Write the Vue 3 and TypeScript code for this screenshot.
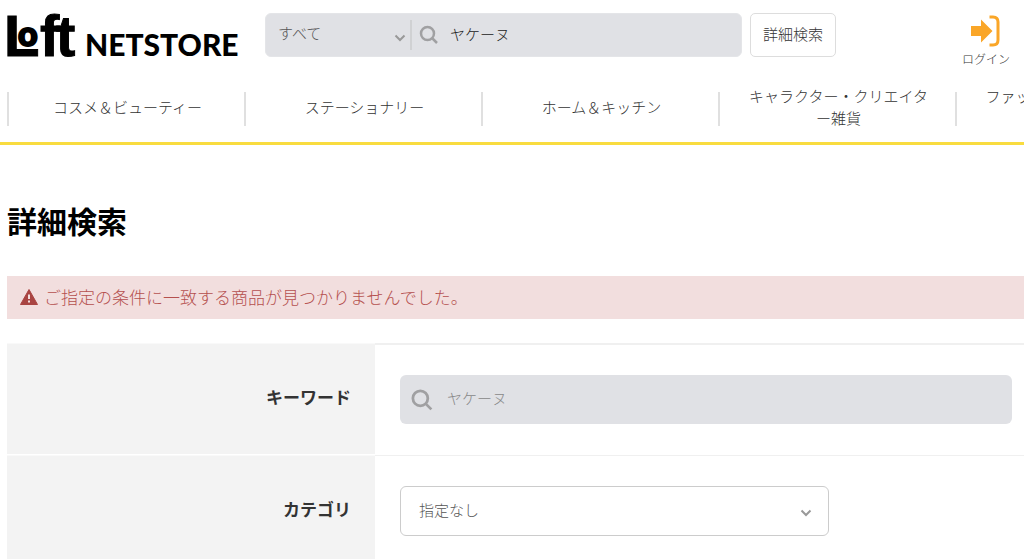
<script setup lang="ts">
import { ref } from 'vue'

const scope = ref('すべて')
const headerKeyword = ref('ヤケーヌ')
const category = ref('指定なし')
const keyword = ref('')

const categories: string[] = [
  'コスメ＆ビューティー',
  'ステーショナリー',
  'ホーム＆キッチン',
  'キャラクター・クリエイター雑貨',
  'ファッション・バッグ・アクセサリー',
]
</script>

<template>
  <div class="page">
    <header class="header">
      <a class="logo" href="#" aria-label="Loft NETSTORE">
        <svg class="mark" viewBox="0 0 68 44" width="68" height="44" aria-hidden="true">
          <text><tspan class="tall" x="-4" y="43">L</tspan><tspan class="round" x="10" y="33">o</tspan><tspan class="tall" x="32" y="43">f</tspan><tspan class="tall" x="48" y="43">t</tspan></text>
        </svg>
        <span class="store">NETSTORE</span>
      </a>

      <form class="search" role="search" @submit.prevent>
        <div class="search-box">
          <div class="scope">
            <select v-model="scope" aria-label="検索対象">
              <option>すべて</option>
            </select>
            <svg class="chevron" viewBox="0 0 12 8" width="12" height="8" aria-hidden="true">
              <path d="M1.500 1.500 6 6l4.500-4.500" />
            </svg>
          </div>
          <svg class="lens" viewBox="0 0 20 20" width="20" height="20" aria-hidden="true">
            <circle cx="8.500" cy="8.500" r="6.500" />
            <path d="m13.500 13.500 4.500 4.500" />
          </svg>
          <input v-model="headerKeyword" type="text" aria-label="検索キーワード" />
        </div>
        <button class="detail" type="button">詳細検索</button>
      </form>

      <a class="login" href="#">
        <svg viewBox="0 0 30 32" width="30" height="32" aria-hidden="true">
          <path class="arrow" d="M0 11h10V4.500L21.500 16 10 27.500V21H0z" />
          <path class="door" d="M18.500 2H22q5 0 5 5v18q0 5-5 5h-3.500" />
        </svg>
        <span>ログイン</span>
      </a>
    </header>

    <nav class="nav" aria-label="商品カテゴリ">
      <a v-for="item in categories" :key="item" href="#">
        <span>{{ item }}</span>
      </a>
    </nav>

    <main class="main">
      <h1>詳細検索</h1>

      <p class="alert" role="alert">
        <svg viewBox="0 0 18 16" width="18" height="16" aria-hidden="true">
          <path class="triangle" d="M9 .5 17.500 15.500H.5z" />
          <path class="bang" d="M9 5.500v4.500M9 11.500v2" />
        </svg>
        <span>ご指定の条件に一致する商品が見つかりませんでした。</span>
      </p>

      <form class="conditions" @submit.prevent>
        <div class="row">
          <label for="keyword">キーワード</label>
          <div class="field">
            <div class="keyword-box">
              <svg class="lens" viewBox="0 0 20 20" width="22" height="22" aria-hidden="true">
                <circle cx="8.500" cy="8.500" r="6.800" />
                <path d="m13.500 13.500 5 5" />
              </svg>
              <input id="keyword" v-model="keyword" type="text" placeholder="ヤケーヌ" />
            </div>
          </div>
        </div>
        <div class="row">
          <label for="category">カテゴリ</label>
          <div class="field">
            <div class="category-box">
              <select id="category" v-model="category">
                <option>指定なし</option>
              </select>
              <svg class="chevron" viewBox="0 0 12 8" width="12" height="8" aria-hidden="true">
                <path d="M1.500 1.500 6 6l4.500-4.500" />
              </svg>
            </div>
          </div>
        </div>
      </form>
    </main>
  </div>
</template>

<style>
body {
  margin: 0;
  background: #fff;
}
</style>

<style scoped>
.page {
  overflow: hidden;
  color: #333;
  font-family: "Noto Sans CJK JP", sans-serif;
  font-size: 15px;
  font-weight: 300;
  line-height: 22px;
}
.page * {
  box-sizing: border-box;
}
a {
  color: inherit;
  text-decoration: none;
}
input,
select,
button {
  margin: 0;
  padding: 0;
  border: 0;
  background: transparent;
  color: inherit;
  font: inherit;
  outline: none;
}
select {
  appearance: none;
}

.header {
  display: flex;
  align-items: flex-start;
  padding: 13px 14px 0 8px;
}
.logo {
  display: flex;
  flex: none;
  align-items: flex-end;
  width: 257px;
  height: 44px;
  color: #000;
}
.mark {
  display: block;
  overflow: visible;
}
.mark tspan {
  font-weight: 700;
  stroke: #000;
}
.mark .tall {
  font-family: "Liberation Sans", sans-serif;
  font-size: 58px;
  stroke-width: 1px;
}
.mark .round {
  font-family: Lato, sans-serif;
  font-size: 34px;
  font-weight: 900;
  stroke-width: 2px;
}
.store {
  margin-left: 9px;
  font-family: Lato, sans-serif;
  font-size: 30px;
  font-weight: 900;
  line-height: 26px;
}
.search {
  display: flex;
  flex: 0 1 571px;
  gap: 8px;
}
.search-box {
  display: flex;
  flex: 1;
  align-items: center;
  height: 44px;
  border: 1px solid #e4e5e8;
  border-radius: 6px;
  background: #e0e1e5;
}
.scope {
  position: relative;
  flex: none;
  width: 146px;
  height: 30px;
  border-right: 2px solid #d0d1d3;
}
.scope select {
  width: 100%;
  height: 26px;
  padding-left: 12px;
  color: #555;
}
.chevron {
  position: absolute;
  fill: none;
  stroke: #999;
  stroke-width: 2;
}
.scope .chevron {
  right: 4px;
  bottom: 8px;
}
.lens {
  flex: none;
  fill: none;
  stroke: #a0a0a2;
  stroke-width: 2.5;
}
.search-box .lens {
  margin-left: 7px;
}
.search-box input {
  flex: 1;
  min-width: 0;
  height: 38px;
  padding: 0 12px 4px 11px;
  color: #222;
}
.detail {
  flex: none;
  width: 86px;
  height: 44px;
  padding-bottom: 2px;
  border: 1px solid #ddd;
  border-radius: 5px;
}
.login {
  display: flex;
  flex-direction: column;
  align-items: center;
  margin-left: auto;
  padding-top: 2px;
  font-size: 12px;
  line-height: 24px;
}
.login svg {
  display: block;
}
.arrow {
  fill: #faa628;
}
.door {
  fill: none;
  stroke: #faa628;
  stroke-width: 3;
}

.nav {
  display: flex;
  padding: 21px 0 16px 7px;
  border-bottom: 3px solid #f9dc3f;
}
.nav a {
  display: flex;
  flex: 0 0 237px;
  align-items: center;
  justify-content: center;
  height: 34px;
  padding: 0 26px 4px 28px;
  border-left: 2px solid #e0e0e0;
  text-align: center;
  line-break: anywhere;
}

.main {
  padding-left: 7px;
}
h1 {
  margin: 0;
  padding: 53px 0 34px;
  color: #000;
  font-size: 30px;
  font-weight: 700;
  line-height: 44px;
}
.alert {
  display: flex;
  align-items: center;
  gap: 6px;
  height: 43px;
  margin: 0 0 24px;
  padding: 0 13px 2px;
  background: #f2dede;
  color: #b5504e;
  font-size: 17px;
}
.triangle {
  fill: #a94442;
  stroke: #a94442;
  stroke-linejoin: round;
}
.bang {
  fill: none;
  stroke: #f2dede;
  stroke-width: 2;
}
.row {
  display: grid;
  grid-template-columns: 368px 1fr;
  margin-bottom: 1px;
}
.row label {
  padding: 42px 24px 46px 0;
  border-top: 1px solid #f9f9f9;
  background: #f3f3f3;
  color: #333;
  font-size: 17px;
  font-weight: 700;
  text-align: right;
}
.field {
  padding: 30px 12px 29px 25px;
  border-top: 2px solid #f0f0f0;
}
.row + .row .field {
  border-top-width: 1px;
}
.keyword-box {
  display: flex;
  align-items: center;
  height: 49px;
  border-radius: 6px;
  background: #e0e1e5;
}
.keyword-box .lens {
  margin-left: 11px;
}
.keyword-box input {
  flex: 1;
  min-width: 0;
  height: 45px;
  padding: 0 12px 4px 14px;
}
.keyword-box input::placeholder {
  color: #888;
  opacity: 1;
}
.category-box {
  position: relative;
  max-width: 429px;
}
.category-box select {
  display: block;
  width: 100%;
  height: 50px;
  padding: 0 40px 2px 18px;
  border: 1px solid #ccc;
  border-radius: 6px;
  color: #555;
}
.category-box .chevron {
  right: 17px;
  bottom: 19px;
}
</style>
